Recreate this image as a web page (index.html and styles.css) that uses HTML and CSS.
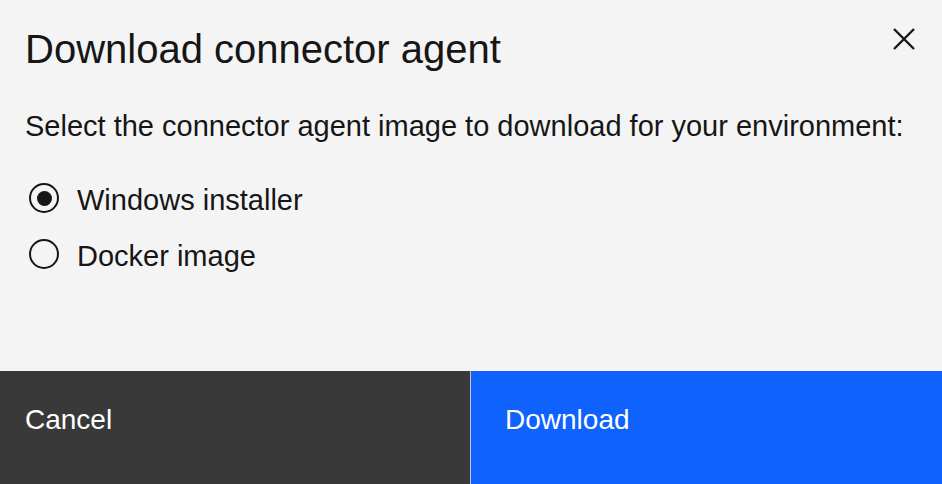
FILE: index.html
```html
<!DOCTYPE html>
<html>
<head>
<meta charset="utf-8">
<link rel="stylesheet" href="styles.css">
</head>
<body>
<div class="modal">
  <div class="header">
    <h2 class="title">Download connector agent</h2>
    <button class="close" aria-label="Close">
      <svg width="24" height="24" viewBox="0 0 24 24"><path d="M2 2L22 22M22 2L2 22" stroke="#161616" stroke-width="2.4" fill="none"/></svg>
    </button>
  </div>
  <div class="content">
    <p class="desc">Select the connector agent image to download for your environment:</p>
    <div class="radios">
      <label class="radio"><span class="dot checked"></span><span class="label">Windows installer</span></label>
      <label class="radio"><span class="dot"></span><span class="label">Docker image</span></label>
    </div>
  </div>
  <div class="footer">
    <button class="btn secondary">Cancel</button>
    <button class="btn primary">Download</button>
  </div>
</div>
</body>
</html>
```
FILE: styles.css
```css
html, body { margin: 0; padding: 0; }
body { background: #f4f4f4; font-family: "Liberation Sans", Arial, sans-serif; color: #161616; }
.modal { width: 942px; height: 484px; display: flex; flex-direction: column; background: #f4f4f4; }
.header { display: flex; justify-content: space-between; align-items: flex-start; padding: 0 26px 0 25px; }
.title { margin: 26px 0 0 0; font-size: 40px; font-weight: 400; line-height: 46px; }
.close { margin-top: 27px; background: none; border: 0; padding: 0; width: 24px; height: 24px; }
.content { flex: 1; padding: 0 25px; }
.desc { margin: 36px 0 0 0; font-size: 29px; line-height: 36px; }
.radios { display: flex; flex-direction: column; gap: 20px; margin-top: 36px; }
.radio { display: flex; align-items: center; height: 36px; }
.dot { width: 30px; height: 30px; box-sizing: border-box; border: 2px solid #161616; border-radius: 50%; margin-left: 4px; margin-right: 18px; display: flex; align-items: center; justify-content: center; }
.dot.checked::after { content: ""; width: 15px; height: 15px; border-radius: 50%; background: #161616; }
.label { font-size: 29px; padding-top: 4px; }
.footer { display: flex; height: 113px; }
.btn { border: 0; margin: 0; font-family: inherit; font-size: 28px; color: #fff; text-align: left; padding: 33px 0 0 25px; display: flex; align-items: flex-start; box-sizing: border-box; }
.secondary { width: 471px; background: #393939; border-right: 1px solid #c6c6c6; }
.primary { flex: 1; background: #0f62fe; padding-left: 34px; }
```
